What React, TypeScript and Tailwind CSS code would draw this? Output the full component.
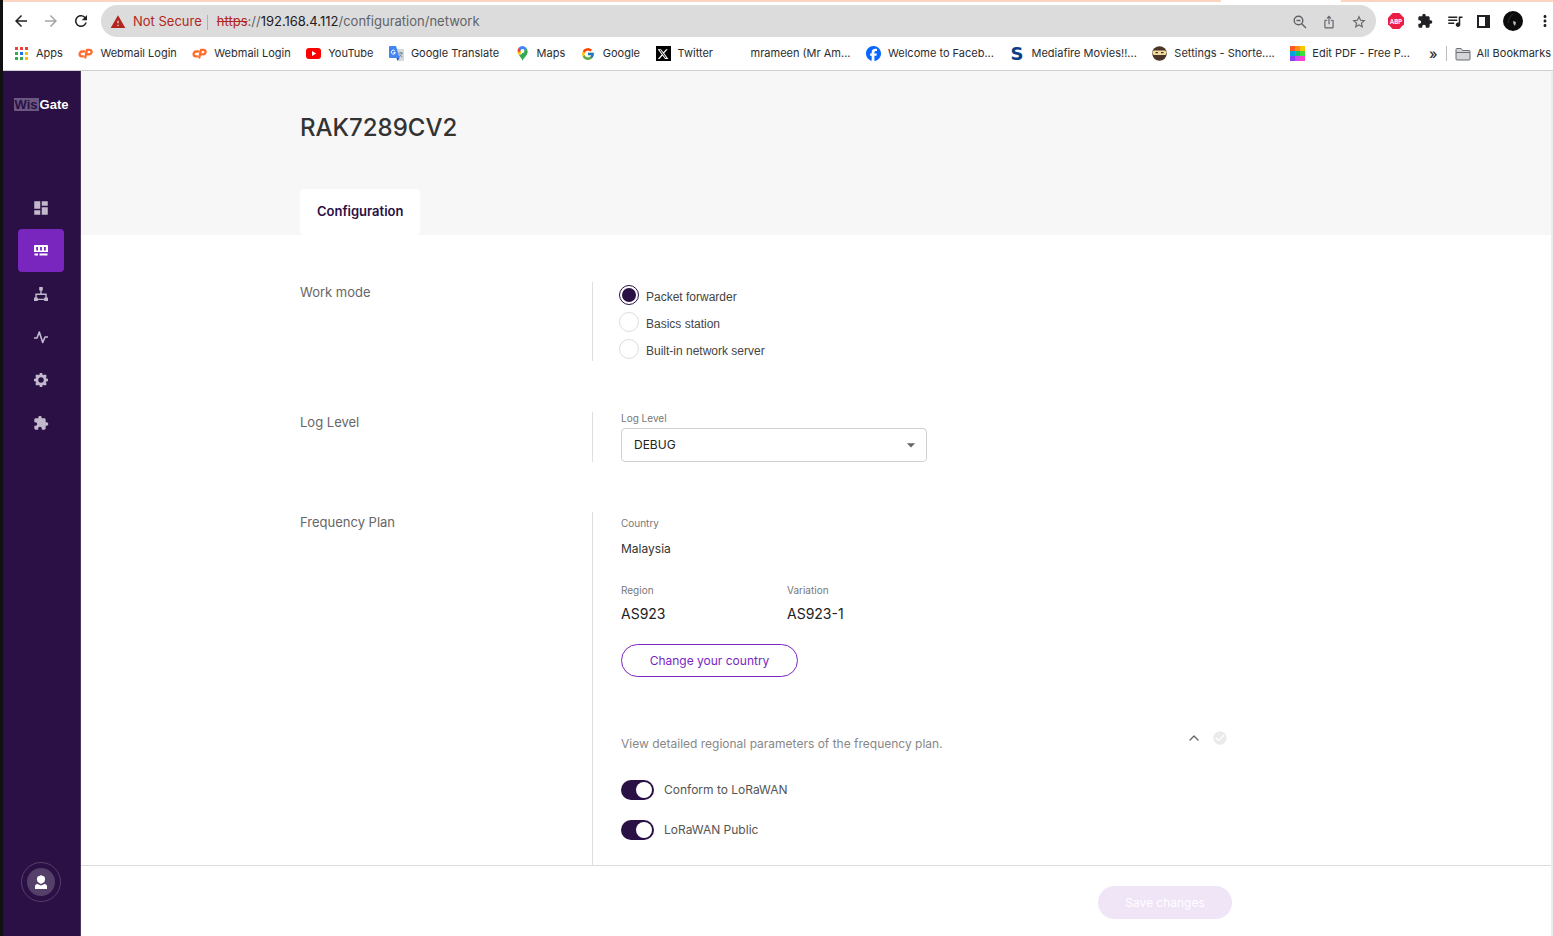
import { useState } from "react";
import type { ReactNode } from "react";
import {
  MdArrowBack,
  MdArrowDropDown,
  MdArrowForward,
  MdCheckCircle,
  MdDashboard,
  MdExtension,
  MdIosShare,
  MdMoreVert,
  MdQueueMusic,
  MdRefresh,
  MdStarBorder,
  MdWarning,
} from "react-icons/md";
import { FcGoogle } from "react-icons/fc";
import { SiFacebook } from "react-icons/si";
import { FaXTwitter } from "react-icons/fa6";
import { ChevronUp } from "lucide-react";

function AppsIcon() {
  const colors = [
    "#ea4335", "#ea4335", "#ea4335",
    "#34a853", "#1a73e8", "#fbbc04",
    "#34a853", "#34a853", "#fbbc04",
  ];
  return (
    <svg viewBox="0 0 13 13" className="h-[13px] w-[13px]">
      {colors.map((color, i) => (
        <rect key={i} x={(i % 3) * 5} y={Math.floor(i / 3) * 5} width="3" height="3" fill={color} />
      ))}
    </svg>
  );
}

function CpanelIcon() {
  return (
    <svg viewBox="0 0 15 11" className="h-[11px] w-[15px]" fill="none" stroke="#ff6c2c" strokeWidth="2.300" strokeLinecap="round" strokeLinejoin="round">
      <path d="M6.300 3.500H4a2.400 2.400 0 0 0 0 4.800h1.200" />
      <path d="M7.300 9.500L9 1.800h2.300a2.300 2.300 0 0 1 0 4.600H9.800" />
    </svg>
  );
}

function YoutubeIcon() {
  return (
    <svg viewBox="0 0 15 15" className="h-[15px] w-[15px]">
      <rect y="2" width="15" height="11" rx="3" fill="#f00" />
      <path d="M6 5l4.200 2.500L6 10z" fill="#fff" />
    </svg>
  );
}

function TranslateIcon() {
  return (
    <svg viewBox="0 0 15 15" className="h-[15px] w-[15px]">
      <path d="M6 3h8a1 1 0 0 1 1 1v10a1 1 0 0 1-1 1H9z" fill="#d5d8dc" />
      <path d="M9.500 7h4.500M11.700 6v1M13 7c-.5 2-1.600 3-3 4M10.500 8.500c.6 1.200 1.500 2 3 2.500" stroke="#607988" strokeWidth=".8" fill="none" />
      <path d="M1 0h6l3.500 12H1a1 1 0 0 1-1-1V1a1 1 0 0 1 1-1z" fill="#4285f4" />
      <path d="M7.500 12h3l-2 3z" fill="#1a56c4" />
      <path d="M5.900 4.900A2 2 0 1 0 6.300 6.500H4.500" stroke="#fff" fill="none" />
    </svg>
  );
}

function MapsIcon() {
  return (
    <svg viewBox="0 0 15 15" className="h-[15px] w-[15px]">
      <path d="M7.500 15c.4-2.800 5-5 5-9.800l-8.500 4C5.500 11.400 7 12.500 7.500 15z" fill="#34a853" />
      <path d="M2.500 5.200c0 1.600.6 2.800 1.500 4L8.500 4z" fill="#fbbc04" />
      <path d="M3.700 1.800a5 5 0 0 0-1.200 3.400l2 .9L7 3.500z" fill="#ea4335" />
      <path d="M3.700 1.800A5 5 0 0 1 11.600 2.300L8.500 6 6 5z" fill="#4285f4" />
      <path d="M11.600 2.300c.6.8.9 1.800.9 2.900 0 1.700-.6 3-1.500 4.200L6.500 8z" fill="#34a853" />
      <circle cx="7.500" cy="5" r="1.900" fill="#fff" />
    </svg>
  );
}

function NinjaIcon() {
  return (
    <svg viewBox="0 0 15 15" className="h-[15px] w-[15px]">
      <circle cx="7.500" cy="7.500" r="7.300" fill="#4b3428" />
      <rect x=".5" y="4.500" width="14" height="4.500" rx="2" fill="#f3dc9f" />
      <path d="M3.500 6.700h2.500M9 6.700h2.500" stroke="#4b3428" strokeWidth="1.200" />
    </svg>
  );
}

function PdfIcon() {
  const colors = [
    "#ff5a1f", "#ff8c1a", "#ffc400",
    "#00a3e0", "#12c46b", "#3ddc3d",
    "#8a3ffc", "#c84bff", "#ff3dd0",
  ];
  return (
    <svg viewBox="0 0 15 15" className="h-[15px] w-[15px]">
      {colors.map((color, i) => (
        <rect key={i} x={(i % 3) * 5} y={Math.floor(i / 3) * 5} width="5" height="5" fill={color} />
      ))}
    </svg>
  );
}

function FolderIcon() {
  return (
    <svg viewBox="0 0 16 14" className="h-[14px] w-4" fill="#d3d5d8" stroke="#6a6d71">
      <path d="M1 2.500a1 1 0 0 1 1-1h4l1.500 2H14a1 1 0 0 1 1 1V12a1 1 0 0 1-1 1H2a1 1 0 0 1-1-1z" />
      <path d="M1 5.500h14" />
    </svg>
  );
}

function ZoomOutIcon() {
  return (
    <svg viewBox="0 0 14 14" className="h-[14px] w-[14px]" fill="none" stroke="currentColor" strokeWidth="1.400">
      <circle cx="5.500" cy="5.500" r="4.300" />
      <path d="M8.700 8.700L13 13M3.500 5.500h4" />
    </svg>
  );
}

function GatewayIcon() {
  return (
    <svg viewBox="0 0 14 12" className="h-3 w-[14px]" fill="currentColor">
      <path
        fillRule="evenodd"
        d="M1 0h12a1 1 0 0 1 1 1v6H0V1a1 1 0 0 1 1-1zM2.200 2v3.500h1.800V2zM6.100 2v3.500h1.800V2zM10 2v3.500h1.800V2z"
      />
      <path d="M.5 8.500h3.500v2H.5zM5.500 8.500h8v2h-8z" />
    </svg>
  );
}

function TopologyIcon() {
  return (
    <svg viewBox="0 0 14 14" className="h-[14px] w-[14px]" fill="currentColor">
      <rect x="5.200" y="0" width="3.600" height="3.600" rx=".5" />
      <path d="M7 3v4M2 11V7.200h10V11M3 12.400h8" stroke="currentColor" strokeWidth="1.400" fill="none" />
      <rect x="0" y="10.600" width="3.800" height="3.400" rx=".5" />
      <rect x="10.200" y="10.600" width="3.800" height="3.400" rx=".5" />
    </svg>
  );
}

function PulseIcon() {
  return (
    <svg viewBox="0 0 14 14" className="h-[14px] w-[14px]" fill="none" stroke="currentColor" strokeWidth="1.600" strokeLinejoin="round">
      <path d="M0 8h3L5.300 2l3.400 10.500L11 7h3" />
    </svg>
  );
}

function GearIcon() {
  return (
    <svg viewBox="0 0 14 14" className="h-[14px] w-[14px]" fill="none" stroke="currentColor">
      <circle cx="7" cy="7" r="4.200" strokeWidth="3" />
      <path
        d="M7 0v2M7 12v2M0 7h2M12 7h2M2.100 2.100l1.400 1.400M10.500 10.500l1.400 1.400M2.100 11.900l1.400-1.400M10.500 3.500l1.400-1.400"
        strokeWidth="2.600"
      />
    </svg>
  );
}

function UserIcon() {
  return (
    <svg viewBox="0 0 14 14" className="h-[14px] w-[14px]" fill="currentColor">
      <path d="M7 0l1 .8 2.400.8.8 2.700-.9 2.700L7 8.900 3.700 7l-.9-2.700.8-2.700L6 .8z" />
      <path d="M1 14v-2.700c0-1.300 1-2.200 2.400-2.300L7 10.500 10.600 9c1.400.1 2.400 1 2.400 2.300V14z" />
    </svg>
  );
}

const bookmarks: { label: string; icon: ReactNode }[] = [
  { label: "Apps", icon: <AppsIcon /> },
  { label: "Webmail Login", icon: <CpanelIcon /> },
  { label: "Webmail Login", icon: <CpanelIcon /> },
  { label: "YouTube", icon: <YoutubeIcon /> },
  { label: "Google Translate", icon: <TranslateIcon /> },
  { label: "Maps", icon: <MapsIcon /> },
  { label: "Google", icon: <FcGoogle className="h-[14px] w-[14px]" /> },
  {
    label: "Twitter",
    icon: (
      <span className="flex h-[15px] w-[15px] items-center justify-center bg-black text-white">
        <FaXTwitter className="h-3 w-3" />
      </span>
    ),
  },
  { label: "mrameen (Mr Am...", icon: null },
  { label: "Welcome to Faceb...", icon: <SiFacebook className="h-[15px] w-[15px] text-[#0866ff]" /> },
  {
    label: "Mediafire Movies!!...",
    icon: <span className="font-['DejaVu_Sans'] text-lg leading-none font-bold text-[#0b3f8a]">S</span>,
  },
  { label: "Settings - Shorte....", icon: <NinjaIcon /> },
  { label: "Edit PDF - Free P...", icon: <PdfIcon /> },
];

function BrowserBar() {
  return (
    <header className="border-b border-[#cfcfcf] bg-white">
      <div className="flex h-[2px] bg-[#fcd5c1]">
        <div className="mr-[212px] ml-auto w-[120px] bg-white" />
      </div>
      <div className="flex items-center pt-[3px] text-[#202124]">
        <div className="flex w-[98px] shrink-0 items-center gap-3 pl-[9px]">
          <button aria-label="Back"><MdArrowBack className="h-[18px] w-[18px]" /></button>
          <button aria-label="Forward" className="text-[#a3a5a8]"><MdArrowForward className="h-[18px] w-[18px]" /></button>
          <button aria-label="Reload"><MdRefresh className="h-[18px] w-[18px]" /></button>
        </div>
        <div className="flex h-8 flex-1 items-center rounded-full bg-[#dcdcdc] px-[9px] pt-[2px] text-[13px]">
          <MdWarning className="h-4 w-4 text-[#b3261e]" />
          <span className="ml-[7px] text-[#b3261e]">Not Secure</span>
          <span className="mr-[9px] ml-[5px] h-[15px] w-px bg-[#aeb0b3]" />
          <span className="text-[#5f6368]">
            <span className="text-[#b3261e] line-through">https</span>://
            <span className="text-[#202124]">192.168.4.112</span>/configuration/network
          </span>
          <div className="ml-auto flex items-center gap-[15px] text-[#5f6368]">
            <button aria-label="Zoom"><ZoomOutIcon /></button>
            <button aria-label="Share"><MdIosShare className="h-[14px] w-[14px]" /></button>
            <button aria-label="Bookmark this page"><MdStarBorder className="h-4 w-4" /></button>
          </div>
        </div>
        <div className="flex shrink-0 items-center gap-[13px] pl-3">
          <button aria-label="Ad blocker">
            <svg viewBox="0 0 16 16" className="h-4 w-4">
              <path d="M4.700 0h6.600L16 4.700v6.600L11.300 16H4.700L0 11.300V4.700z" fill="#ed1e45" />
              <text x="8" y="10.500" textAnchor="middle" fontSize="6" fontWeight="700" fill="#fff">ABP</text>
            </svg>
          </button>
          <button aria-label="Extensions"><MdExtension className="h-4 w-4" /></button>
          <button aria-label="Media"><MdQueueMusic className="h-[18px] w-[18px]" /></button>
          <button aria-label="Side panel">
            <svg viewBox="0 0 13 13" className="h-[13px] w-[13px]">
              <rect x="1" y="1" width="11" height="11" fill="none" stroke="currentColor" strokeWidth="2" />
              <path d="M8 1h4v11H8z" fill="currentColor" />
            </svg>
          </button>
          <button aria-label="Profile">
            <svg viewBox="0 0 20 20" className="h-5 w-5">
              <circle cx="10" cy="10" r="10" fill="#0b0b0b" />
              <path d="M10 3c-3 2-5 6-5 9" stroke="#2e2e2e" fill="none" />
              <path d="M10 10l3 1-1 4-1.500-2z" fill="#bdbdbd" />
            </svg>
          </button>
          <button aria-label="Menu" className="-mr-px"><MdMoreVert className="h-[18px] w-[18px]" /></button>
        </div>
      </div>
      <nav className="flex h-[33px] items-center pl-[11px] text-[11px] whitespace-nowrap text-[#2b2c2f]">
        <div className="flex flex-1 justify-between pr-[19px]">
          {bookmarks.map((bookmark, i) => (
            <a key={i} href="#" className="flex items-center gap-[7px]">
              <span className="flex h-[15px] w-[15px] shrink-0 items-center justify-center">{bookmark.icon}</span>
              {bookmark.label}
            </a>
          ))}
        </div>
        <button className="text-sm leading-none font-medium" aria-label="More bookmarks">»</button>
        <span className="mx-2 h-[15px] w-px bg-[#b9bbbe]" />
        <a href="#" className="flex items-center gap-[6px] pr-[2px]">
          <FolderIcon />
          All Bookmarks
        </a>
      </nav>
    </header>
  );
}

const navItems = [
  { label: "Dashboard", icon: <MdDashboard className="h-[18px] w-[18px]" /> },
  { label: "Gateway", icon: <GatewayIcon />, active: true },
  { label: "Network", icon: <TopologyIcon /> },
  { label: "Diagnostics", icon: <PulseIcon /> },
  { label: "Settings", icon: <GearIcon /> },
  { label: "Extensions", icon: <MdExtension className="h-4 w-4" /> },
];

function Sidebar() {
  return (
    <aside className="flex w-[78px] shrink-0 flex-col items-center border-r border-[#4a3563] bg-[#2a1045] pt-[27px] pr-px pb-[34px]">
      <div className="flex items-center gap-px font-['Liberation_Sans'] text-[13px] leading-[13px] font-bold text-white">
        <span className="bg-[#6b577f] px-px text-[#2a1045]">Wis</span>
        <span>Gate</span>
      </div>
      <nav className="mt-[75px] flex flex-col">
        {navItems.map((item) => (
          <a
            key={item.label}
            href="#"
            aria-label={item.label}
            className={
              item.active
                ? "flex h-[43px] w-[46px] items-center justify-center rounded-sm bg-[#7926bf] text-white"
                : "flex h-[43px] w-[46px] items-center justify-center text-[#c3b9cd]"
            }
          >
            {item.icon}
          </a>
        ))}
      </nav>
      <button aria-label="Account" className="mt-auto flex h-10 w-10 items-center justify-center rounded-full border border-[#554069]">
        <span className="flex h-7 w-7 items-center justify-center rounded-full bg-[#554069] text-white">
          <UserIcon />
        </span>
      </button>
    </aside>
  );
}

function Section({ title, className, children }: { title: string; className: string; children: ReactNode }) {
  return (
    <section className={`flex ${className}`}>
      <h2 className="w-[292px] shrink-0 text-[13px] leading-5 text-[#666]">{title}</h2>
      <div className="flex-1 border-l border-[#dedede] pl-7">{children}</div>
    </section>
  );
}

function Field({ label, children }: { label: string; children: ReactNode }) {
  return (
    <div>
      <dt className="text-[10px] leading-4 text-[#777]">{label}</dt>
      <dd>{children}</dd>
    </div>
  );
}

function Toggle({ label }: { label: string }) {
  const [on, setOn] = useState(true);
  return (
    <label className="flex h-5 items-center gap-[10px] text-xs text-[#555]">
      <input
        type="checkbox"
        role="switch"
        checked={on}
        onChange={() => setOn(!on)}
        className="flex h-5 w-[33px] appearance-none items-center rounded-full bg-[#bbb] px-[2px] before:h-4 before:w-4 before:rounded-full before:bg-white checked:justify-end checked:bg-[#2a1045]"
      />
      {label}
    </label>
  );
}

const workModes = ["Packet forwarder", "Basics station", "Built-in network server"];

export default function App() {
  const [mode, setMode] = useState(workModes[0]);

  return (
    <div className="flex min-h-screen flex-col border-l-[3px] border-[#111] bg-white font-['Inter',sans-serif]">
      <BrowserBar />
      <div className="flex flex-1">
        <Sidebar />
        <div className="flex flex-1 flex-col border-r-2 border-[#ececec]">
          <div className="bg-[#f7f7f7] pl-[219px]">
            <h1 className="pt-[41px] text-2xl leading-8 font-medium text-[#333]">RAK7289CV2</h1>
            <div className="mt-[45px] flex">
              <button className="h-[46px] rounded-sm bg-white px-[17px] text-[13px] font-semibold text-[#2a1045]">
                Configuration
              </button>
            </div>
          </div>

          <main className="flex flex-1 flex-col pt-[47px] pr-[319px] pl-[219px]">
            <Section title="Work mode" className="mb-[51px]">
              <div role="radiogroup" aria-label="Work mode" className="-ml-[2px] flex flex-col gap-[7px] pt-[3px] pb-[2px]">
                {workModes.map((item) => (
                  <label key={item} className="flex h-5 items-center gap-[7px] font-['Liberation_Sans'] text-xs text-[#444]">
                    <input
                      type="radio"
                      name="work-mode"
                      checked={mode === item}
                      onChange={() => setMode(item)}
                      className="flex h-5 w-5 appearance-none items-center justify-center rounded-full border border-[#ddd] checked:border-[#2a1045] checked:before:h-[14px] checked:before:w-[14px] checked:before:rounded-full checked:before:bg-[#2a1045]"
                    />
                    <span className="pt-[3px]">{item}</span>
                  </label>
                ))}
              </div>
            </Section>

            <Section title="Log Level" className="mb-[50px]">
              <label htmlFor="log-level" className="mb-1 block text-[10px] leading-3 text-[#777]">
                Log Level
              </label>
              <div className="relative w-[306px]">
                <select
                  id="log-level"
                  defaultValue="DEBUG"
                  className="h-[34px] w-full appearance-none rounded-sm border border-[#d0d0d0] bg-white px-3 text-xs text-[#222]"
                >
                  <option>DEBUG</option>
                  <option>INFO</option>
                  <option>WARNING</option>
                  <option>ERROR</option>
                </select>
                <MdArrowDropDown className="pointer-events-none absolute top-[7px] right-[6px] h-5 w-5 text-[#666]" />
              </div>
            </Section>

            <Section title="Frequency Plan" className="flex-1">
              <dl className="pt-[3px]">
                <Field label="Country">
                  <span className="mt-2 block text-xs leading-5 text-[#333]">Malaysia</span>
                </Field>
                <div className="mt-[23px] flex">
                  <div className="w-[166px]">
                    <Field label="Region">
                      <span className="mt-[6px] block text-sm leading-5 text-[#222]">AS923</span>
                    </Field>
                  </div>
                  <Field label="Variation">
                    <span className="mt-[6px] block text-sm leading-5 text-[#222]">AS923-1</span>
                  </Field>
                </div>
              </dl>
              <button className="mt-5 h-[33px] w-[177px] rounded-full border border-[#7926bf] text-xs text-[#7926bf]">
                Change your country
              </button>
              <div className="mt-[51px] flex items-start justify-between pr-1">
                <p className="pt-[6px] text-xs leading-5 text-[#888]">
                  View detailed regional parameters of the frequency plan.
                </p>
                <div className="flex h-5 items-center gap-[10px]">
                  <button aria-label="Collapse"><ChevronUp className="h-4 w-4 text-[#666]" strokeWidth={2} /></button>
                  <MdCheckCircle className="h-4 w-4 text-[#eaeaea]" />
                </div>
              </div>
              <div className="mt-[26px] flex flex-col gap-5">
                <Toggle label="Conform to LoRaWAN" />
                <Toggle label="LoRaWAN Public" />
              </div>
            </Section>
          </main>

          <footer className="flex justify-end border-t border-[#dcdcdc] pt-5 pr-[319px] pb-[17px]">
            <button disabled className="h-[33px] w-[134px] rounded-full bg-[#f0e4f7] text-xs text-white">
              Save changes
            </button>
          </footer>
        </div>
      </div>
    </div>
  );
}
